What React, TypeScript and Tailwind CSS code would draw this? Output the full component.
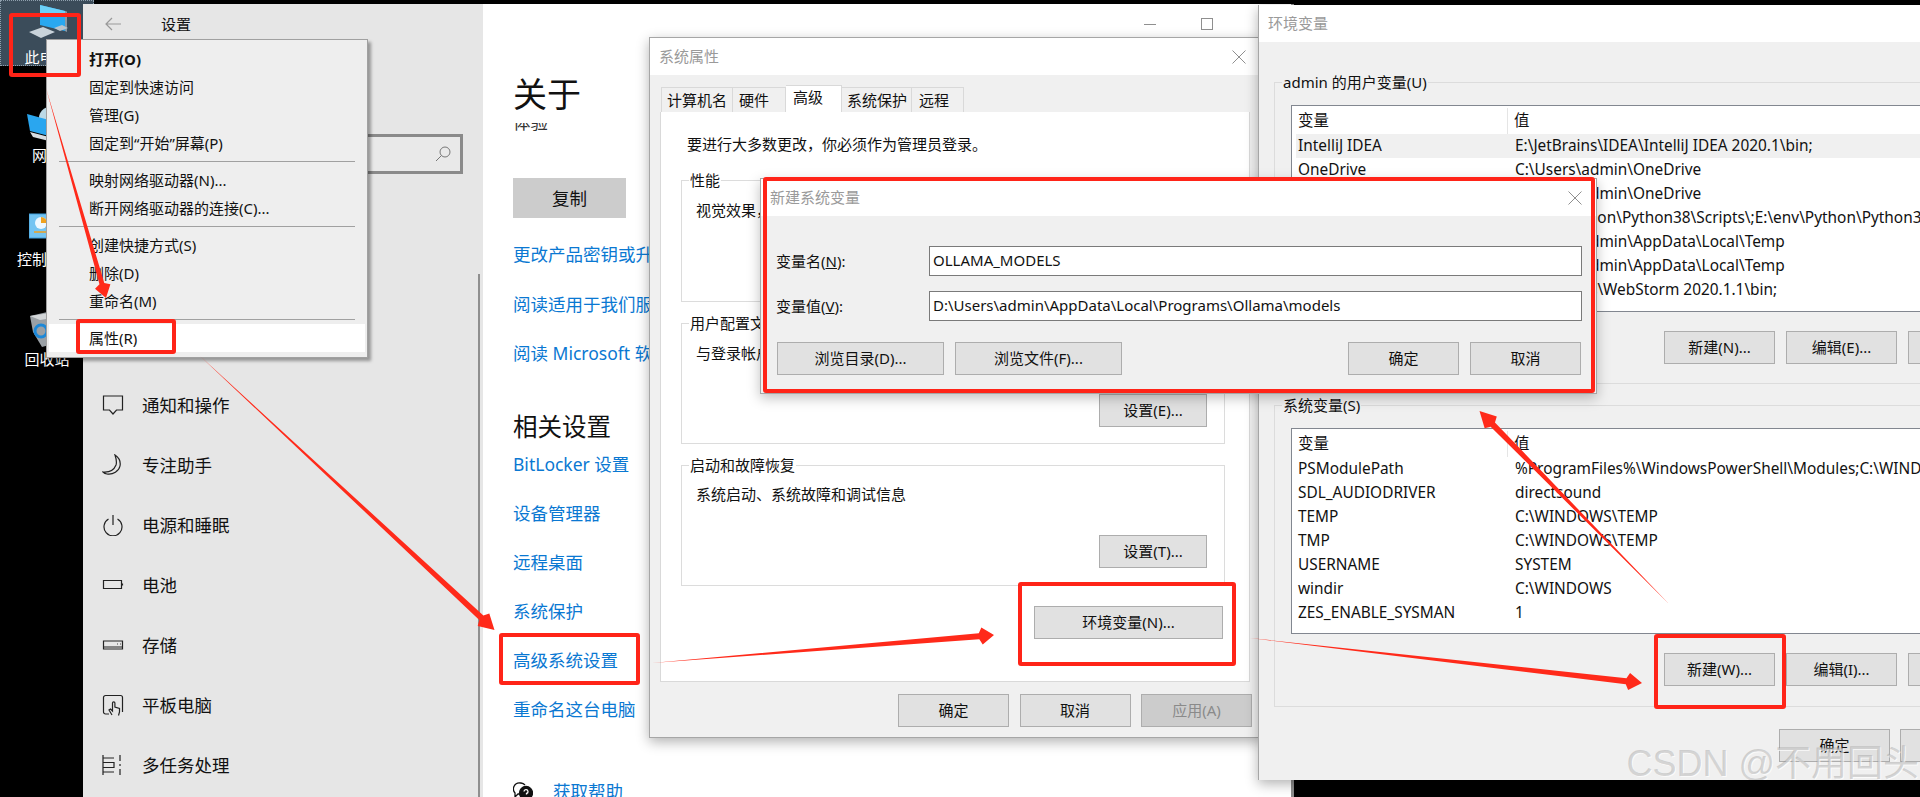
import type { ReactNode } from 'react';

function cnJoin(...parts: (string | undefined | false)[]): string {
  return parts.filter(Boolean).join(' ');
}

function WinButton({ children, className, disabled }: { children: ReactNode; className?: string; disabled?: boolean }) {
  return (
    <div
      className={cnJoin(
        'flex h-[33px] shrink-0 items-center justify-center border border-[#adadad] text-[15px]',
        disabled ? 'bg-[#cccccc] text-[#8a8a8a]' : 'bg-[#e1e1e1] text-[#111111]',
        className
      )}
    >
      {children}
    </div>
  );
}

function CloseX({ className }: { className?: string }) {
  return (
    <svg width="14" height="14" viewBox="0 0 14 14" className={className} fill="none" stroke="#8f8f8f" strokeWidth="1">
      <path d="M0.5 0.500 13.500 13.500M13.500 0.500 0.500 13.500" />
    </svg>
  );
}

function TitleBar({ title, height, close }: { title: string; height: string; close?: string }) {
  return (
    <div className={cnJoin('flex shrink-0 items-center justify-between bg-white pl-[9px] text-[15px] text-[#9a9a9a]', height)}>
      <span>{title}</span>
      {close ? <CloseX className={close} /> : null}
    </div>
  );
}

function Group({ legend, className, children }: { legend: string; className?: string; children: ReactNode }) {
  return (
    <fieldset className={cnJoin('border border-[#dcdcdc]', className)}>
      <legend className="ml-[7px] px-[1px] text-[15px] leading-[20px] text-[#111111]">{legend}</legend>
      {children}
    </fieldset>
  );
}

function NavIcon({ d }: { d: string }) {
  return (
    <svg width="22" height="22" viewBox="0 0 22 22" fill="none" stroke="#222222" strokeWidth="1.200" className="shrink-0">
      <path d={d} />
    </svg>
  );
}

const navItems = [
  { label: '通知和操作', d: 'M1.500 2h19v14h-6l-3.500 4-3.500-4h-6z' },
  { label: '专注助手', d: 'M13 1c3 2 6 6 5 11-1 5-7 9-13 8-2-.3-3-1-4-2 6 .5 11-2 13-7 1-3 0-7-1-10z' },
  { label: '电源和睡眠', d: 'M6.500 5a9 9 0 1 0 9 0M11 1v10' },
  { label: '电池', d: 'M1.500 6.500h18v8h-18zM20.500 9.500v2' },
  { label: '存储', d: 'M1.500 7h19v8h-19zM1.500 13h19M15 10h.8M18 10h.8' },
  { label: '平板电脑', d: 'M7 20H3.500a2 2 0 0 1-2-2V3.500a2 2 0 0 1 2-2h15a2 2 0 0 1 2 2V18M10 21l-3-5 1.500-1 2 2V9a1.200 1.200 0 0 1 2.400 0v4l4.600 1.500V18l-1 3.500' },
  { label: '多任务处理', d: 'M1 1v20M1 4h11M1 18h11M1 8.500h11v5H1M18 1v6M18 15v6M18 10v2' },
];

const userRows = [
  ['IntelliJ IDEA', 'E:\\JetBrains\\IDEA\\IntelliJ IDEA 2020.1\\bin;'],
  ['OneDrive', 'C:\\Users\\admin\\OneDrive'],
  ['OneDriveConsumer', 'C:\\Users\\admin\\OneDrive'],
  ['Path', 'E:\\env\\Python\\Python38\\Scripts\\;E:\\env\\Python\\Python38\\;C:\\Users\\admin'],
  ['TEMP', 'C:\\Users\\admin\\AppData\\Local\\Temp'],
  ['TMP', 'C:\\Users\\admin\\AppData\\Local\\Temp'],
  ['WebStorm', 'E:\\JetBrains\\WebStorm 2020.1.1\\bin;'],
];

const systemRows = [
  ['PSModulePath', '%ProgramFiles%\\WindowsPowerShell\\Modules;C:\\WINDOWS\\system32'],
  ['SDL_AUDIODRIVER', 'directsound'],
  ['TEMP', 'C:\\WINDOWS\\TEMP'],
  ['TMP', 'C:\\WINDOWS\\TEMP'],
  ['USERNAME', 'SYSTEM'],
  ['windir', 'C:\\WINDOWS'],
  ['ZES_ENABLE_SYSMAN', '1'],
];

function VarList({ rows, height, highlightFirst }: { rows: string[][]; height: string; highlightFirst?: boolean }) {
  return (
    <div className={cnJoin('w-[800px] shrink-0 border border-[#828790] bg-white pl-[4px] pt-[2px] text-[15.400px] text-[#111111]', height)}>
      <div className="flex h-[26px] items-center">
        <span className="flex h-full w-[212px] items-center border-r border-[#e5e5e5] pl-[2px]">变量</span>
        <span className="pl-[6px]">值</span>
      </div>
      {rows.map((row, i) => (
        <div key={row[0] + i} className={cnJoin('flex h-[24px] items-center whitespace-nowrap', highlightFirst && i === 0 && 'bg-[#f0f0f0]')}>
          <span className="w-[219px] shrink-0 pl-[2px]">{row[0]}</span>
          <span>{row[1]}</span>
        </div>
      ))}
    </div>
  );
}

function DesktopLabel({ text, className, children }: { text: string; className: string; children: ReactNode }) {
  return (
    <div className={cnJoin('absolute left-0 flex w-[94px] flex-col items-center text-[15px] text-white', className)}>
      {children}
      <span>{text}</span>
    </div>
  );
}

function RedBox({ className }: { className: string }) {
  return <div className={cnJoin('absolute rounded-[3px] border-[4px] border-[#ff2418]', className)} />;
}

function arrowPoints(x1: number, y1: number, x2: number, y2: number, len: number, wing: number, shaft: number): string {
  const d = Math.hypot(x2 - x1, y2 - y1);
  const ux = (x2 - x1) / d;
  const uy = (y2 - y1) / d;
  const bx = x2 - ux * len;
  const by = y2 - uy * len;
  const nx = x2 - ux * (len + 3);
  const ny = y2 - uy * (len + 3);
  const pts = [
    [x1, y1],
    [nx - uy * shaft, ny + ux * shaft],
    [bx - uy * wing, by + ux * wing],
    [x2, y2],
    [bx + uy * wing, by - ux * wing],
    [nx + uy * shaft, ny - ux * shaft],
  ];
  return pts.map((p) => p.join(',')).join(' ');
}

const arrows = [
  arrowPoints(46, 88, 106, 298, 12, 8, 2.500),
  arrowPoints(200, 356, 494.500, 630, 15, 8.500, 3),
  arrowPoints(652, 663, 994, 635, 12, 8.500, 3),
  arrowPoints(1250, 638, 1642, 683, 13, 8.500, 3),
  arrowPoints(1669, 604, 1479.500, 411, 16, 8.500, 3),
];

const linkClass = 'flex h-[28px] shrink-0 items-center whitespace-nowrap text-[17.500px] text-[#0a78d2]';

export default function App() {
  return (
    <div className="relative h-[797px] w-[1920px] overflow-hidden bg-black font-['Noto_Sans','Noto_Sans_CJK_SC',sans-serif]">
      {/* desktop */}
      <div className="absolute left-0 top-0 h-[66px] w-[94px] border border-dotted border-[#8fa0ae] bg-[#3b4c5a]" />
      <DesktopLabel text="此电脑" className="top-[4px]">
        <svg width="42" height="34" viewBox="0 0 42 34" className="mb-[8px] ml-[6px]">
          <path d="M11 1l25 6v20L11 21z" fill="#29a8f0" />
          <path d="M11 1l25 6v5L11 10z" fill="#6cd0f8" />
          <path d="M36 7l2 .5V28l-2-1z" fill="#8a98a4" />
          <path d="M0 28l14-5 12 5-14 6z" fill="#c9d3da" />
          <path d="M25 24l8-3 6 3-8 3z" fill="#b9c4cc" />
        </svg>
      </DesktopLabel>
      <DesktopLabel text="网络" className="top-[106px]">
        <svg width="40" height="38" viewBox="0 0 40 38">
          <circle cx="23" cy="12" r="11" fill="#bcd9e6" />
          <path d="M0 8l22 6v16L3 25z" fill="#2aa6ef" />
          <path d="M3 26l19 5v4L6 31z" fill="#d7dde2" />
        </svg>
      </DesktopLabel>
      <DesktopLabel text="控制面板" className="top-[212px]">
        <svg width="36" height="28" viewBox="0 0 36 28" className="mb-[8px]">
          <rect x="0" y="2" width="36" height="24" fill="#74c4f2" stroke="#3f9fdc" />
          <circle cx="12" cy="11" r="6" fill="#eef8ff" />
          <path d="M12 11V5a6 6 0 0 1 6 6z" fill="#f0a21e" />
          <path d="M5 20h14" stroke="#f0a21e" strokeWidth="1.500" />
        </svg>
      </DesktopLabel>
      <DesktopLabel text="回收站" className="top-[310px]">
        <svg width="36" height="38" viewBox="0 0 36 38">
          <path d="M1 6l26-6 8 6-4 26-18 5L4 22z" fill="#9aa0a5" />
          <path d="M1 6l26-4 8 4-24 4z" fill="#d3d6d8" />
          <circle cx="12" cy="21" r="6" fill="none" stroke="#1c88d8" strokeWidth="3" />
        </svg>
      </DesktopLabel>

      {/* settings window */}
      <div className="absolute left-[83px] top-[4px] flex h-[793px] w-[1211px] overflow-hidden border-r-[3px] border-[#8c8c8c] bg-white">
        <div className="relative w-[400px] shrink-0 bg-[#e6e6e6]">
          <div className="flex h-[40px] items-center pl-[22px] text-[15px] text-[#111111]">
            <svg width="16" height="14" viewBox="0 0 16 14" fill="none" stroke="#999999" strokeWidth="1.200">
              <path d="M16 7H1M7 1 1 7l6 6" />
            </svg>
            <span className="ml-[40px]">设置</span>
          </div>
          <div className="ml-[20px] mt-[90px] flex h-[40px] w-[360px] items-center justify-end border-[3px] border-[#8a8a8a] bg-[#e9e9e9] pr-[9px]">
            <svg width="16" height="16" viewBox="0 0 16 16" fill="none" stroke="#777777" strokeWidth="1">
              <circle cx="10" cy="6" r="5" />
              <path d="M6.500 9.500 1 15" />
            </svg>
          </div>
          <div className="mt-[201px] flex flex-col pl-[19px] text-[17.500px] text-[#111111]">
            {navItems.map((item) => (
              <div key={item.label} className="flex h-[60px] items-center gap-[18px]">
                <NavIcon d={item.d} />
                <span>{item.label}</span>
              </div>
            ))}
          </div>
          <div className="absolute bottom-0 right-[3px] top-[270px] w-[2px] bg-[#8f8f8f]" />
        </div>
        <div className="flex min-w-0 flex-1 flex-col pl-[30px]">
          <div className="flex h-[40px] shrink-0 items-center justify-end gap-[45px] pr-[78px]">
            <div className="h-px w-[12px] bg-[#8f8f8f]" />
            <div className="h-[12px] w-[12px] border border-[#8f8f8f]" />
          </div>
          <div className="mt-[25px] flex h-[50px] shrink-0 items-center text-[34px] text-[#111111]">关于</div>
          <div className="mt-[4px] h-[9px] shrink-0 overflow-hidden text-[17.500px] leading-[24px] text-[#333333]">
            <div className="-mt-[13px]">体验</div>
          </div>
          <div className="mt-[46px] flex h-[40px] w-[113px] shrink-0 items-center justify-center bg-[#cccccc] text-[17.500px] text-[#111111]">复制</div>
          <div className={cnJoin(linkClass, 'mt-[22px]')}>更改产品密钥或升级 Windows</div>
          <div className={cnJoin(linkClass, 'mt-[22px]')}>阅读适用于我们服务的 Microsoft 服务协议</div>
          <div className={cnJoin(linkClass, 'mt-[21px]')}>阅读 Microsoft 软件许可条款</div>
          <div className="mt-[40px] flex h-[40px] shrink-0 items-center text-[24.500px] text-[#111111]">相关设置</div>
          <div className={cnJoin(linkClass, 'mt-[3px]')}>BitLocker 设置</div>
          <div className={cnJoin(linkClass, 'mt-[21px]')}>设备管理器</div>
          <div className={cnJoin(linkClass, 'mt-[21px]')}>远程桌面</div>
          <div className={cnJoin(linkClass, 'mt-[21px]')}>系统保护</div>
          <div className={cnJoin(linkClass, 'mt-[21px]')}>高级系统设置</div>
          <div className={cnJoin(linkClass, 'mt-[21px]')}>重命名这台电脑</div>
          <div className={cnJoin(linkClass, 'mt-[54px] gap-[20px]')}>
            <svg width="20" height="20" viewBox="0 0 20 20" fill="none" stroke="#111111" strokeWidth="1.300">
              <path d="M8 13H5l-3 3v-4a6 6 0 0 1 5-10h1a6 6 0 0 1 4 2" />
              <circle cx="13" cy="12" r="6.500" fill="#111111" />
              <path d="M11 10.500a2 2 0 1 1 2.500 2v1" stroke="#ffffff" />
            </svg>
            <span>获取帮助</span>
          </div>
        </div>
      </div>

      {/* context menu */}
      <div className="absolute left-[46px] top-[39px] flex w-[322px] flex-col border border-[#a0a0a0] bg-[#eeeeee] py-[5px] text-[15px] text-[#111111] shadow-[3px_3px_3px_rgba(0,0,0,0.35)]">
        <div className="flex h-[28px] items-center pl-[42px] font-bold">打开(O)</div>
        <div className="flex h-[28px] items-center pl-[42px]">固定到快速访问</div>
        <div className="flex h-[28px] items-center pl-[42px]">管理(G)</div>
        <div className="flex h-[28px] items-center pl-[42px]">固定到“开始”屏幕(P)</div>
        <div className="mx-[12px] my-[4px] h-px bg-[#a0a0a0]" />
        <div className="flex h-[28px] items-center pl-[42px]">映射网络驱动器(N)...</div>
        <div className="flex h-[28px] items-center pl-[42px]">断开网络驱动器的连接(C)...</div>
        <div className="mx-[12px] my-[4px] h-px bg-[#a0a0a0]" />
        <div className="flex h-[28px] items-center pl-[42px]">创建快捷方式(S)</div>
        <div className="flex h-[28px] items-center pl-[42px]">删除(D)</div>
        <div className="flex h-[28px] items-center pl-[42px]">重命名(M)</div>
        <div className="mx-[12px] my-[4px] h-px bg-[#a0a0a0]" />
        <div className="mx-[2px] flex h-[28px] items-center bg-white pl-[40px]">属性(R)</div>
      </div>

      {/* system properties */}
      <div className="absolute left-[649px] top-[37px] flex h-[701px] w-[614px] flex-col border border-[#a6a6a6] bg-[#f0f0f0] shadow-[0_4px_12px_rgba(0,0,0,0.3)]">
        <TitleBar title="系统属性" height="h-[37px]" close="mr-[16px]" />
        <div className="ml-[11px] mt-[10px] flex h-[27px] items-end text-[15px] text-[#111111]">
          <div className="flex h-[25px] w-[72px] items-center border border-b-0 border-[#d9d9d9] pl-[5px]">计算机名</div>
          <div className="flex h-[25px] w-[53px] items-center border-r border-t border-[#d9d9d9] pl-[6px]">硬件</div>
          <div className="flex h-[27px] w-[56px] items-center border-r border-t border-[#d9d9d9] bg-white pb-[3px] pl-[7px]">高级</div>
          <div className="flex h-[25px] w-[70px] items-center border-r border-t border-[#d9d9d9] pl-[5px]">系统保护</div>
          <div className="flex h-[25px] w-[52px] items-center border-r border-t border-[#d9d9d9] pl-[7px]">远程</div>
        </div>
        <div className="ml-[10px] flex h-[570px] w-[590px] shrink-0 flex-col border border-t-0 border-[#d9d9d9] bg-white pl-[20px] pr-[24px] text-[15px] text-[#111111]">
          <div className="ml-[6px] mt-[22px] flex h-[20px] items-center">要进行大多数更改，你必须作为管理员登录。</div>
          <Group legend="性能" className="mt-[16px] h-[132px]">
            <div className="flex flex-col px-[14px]">
              <div className="mt-[10px] h-[20px] leading-[20px]">视觉效果，处理器计划，内存使用，以及虚拟内存</div>
              <WinButton className="ml-auto mr-[3px] mt-[31px] w-[108px]">设置(S)...</WinButton>
            </div>
          </Group>
          <Group legend="用户配置文件" className="mt-[11px] h-[131px]">
            <div className="flex flex-col px-[14px]">
              <div className="mt-[10px] h-[20px] leading-[20px]">与登录帐户相关的桌面设置</div>
              <WinButton className="ml-auto mr-[3px] mt-[31px] w-[108px]">设置(E)...</WinButton>
            </div>
          </Group>
          <Group legend="启动和故障恢复" className="mt-[11px] h-[131px]">
            <div className="flex flex-col px-[14px]">
              <div className="mt-[9px] h-[20px] leading-[20px]">系统启动、系统故障和调试信息</div>
              <WinButton className="ml-auto mr-[3px] mt-[31px] w-[108px]">设置(T)...</WinButton>
            </div>
          </Group>
          <WinButton className="ml-auto mr-[2px] mt-[20px] w-[189px]">环境变量(N)...</WinButton>
        </div>
        <div className="mr-[10px] mt-[12px] flex justify-end gap-[10.500px]">
          <WinButton className="w-[111px]">确定</WinButton>
          <WinButton className="w-[111px]">取消</WinButton>
          <WinButton className="w-[111px]" disabled>应用(A)</WinButton>
        </div>
      </div>

      {/* environment variables */}
      <div className="absolute left-[1258px] right-0 top-[5px] flex h-[775px] flex-col overflow-hidden border-l border-[#a6a6a6] bg-[#f0f0f0] shadow-[0_4px_12px_rgba(0,0,0,0.3)]">
        <TitleBar title="环境变量" height="h-[37px]" />
        <div className="ml-[15px] mt-[30px] flex w-[900px] flex-col">
          <Group legend="admin 的用户变量(U)" className="h-[312px]">
            <div className="flex flex-col pl-[16px]">
              <div className="mt-[13px]">
                <VarList rows={userRows} height="h-[207px]" highlightFirst />
              </div>
              <div className="ml-[373px] mt-[19px] flex gap-[11px]">
                <WinButton className="w-[111px]">新建(N)...</WinButton>
                <WinButton className="w-[111px]">编辑(E)...</WinButton>
                <WinButton className="w-[111px]">删除(D)</WinButton>
              </div>
            </div>
          </Group>
          <Group legend="系统变量(S)" className="mt-[11px] h-[312px]">
            <div className="flex flex-col pl-[16px]">
              <div className="mt-[13px]">
                <VarList rows={systemRows} height="h-[206px]" />
              </div>
              <div className="ml-[373px] mt-[19px] flex gap-[11px]">
                <WinButton className="w-[111px]">新建(W)...</WinButton>
                <WinButton className="w-[111px]">编辑(I)...</WinButton>
                <WinButton className="w-[111px]">删除(L)</WinButton>
              </div>
            </div>
          </Group>
          <div className="ml-[505px] mt-[22px] flex gap-[10px]">
            <WinButton className="w-[111px]">确定</WinButton>
            <WinButton className="w-[111px]">取消</WinButton>
          </div>
        </div>
        <div className="absolute bottom-[-6px] right-[1px] whitespace-nowrap font-['Liberation_Sans','Noto_Sans_CJK_SC',sans-serif] text-[36px] leading-[44px] text-[#8c8c8c]/35 [text-shadow:1px_1px_0_rgba(255,255,255,0.7)]">
          CSDN @不用回头
        </div>
      </div>

      {/* new system variable */}
      <div className="absolute left-[760px] top-[178px] flex h-[216px] w-[837px] flex-col border border-[#a6a6a6] bg-[#f0f0f0] shadow-[0_4px_12px_rgba(0,0,0,0.25)]">
        <TitleBar title="新建系统变量" height="h-[37px]" close="mr-[14px]" />
        <div className="mt-[30px] flex items-center pl-[15px] text-[15px] text-[#111111]">
          <span className="w-[153px]">变量名(<span className="underline">N</span>):</span>
          <div className="flex h-[30px] w-[653px] items-center border border-[#7a7a7a] bg-white pb-[2px] pl-[3px]">OLLAMA_MODELS</div>
        </div>
        <div className="mt-[15px] flex items-center pl-[15px] text-[15px] text-[#111111]">
          <span className="w-[153px]">变量值(<span className="underline">V</span>):</span>
          <div className="flex h-[30px] w-[653px] items-center border border-[#7a7a7a] bg-white pb-[2px] pl-[3px]">D:\Users\admin\AppData\Local\Programs\Ollama\models</div>
        </div>
        <div className="mt-[21px] flex gap-[11px] pl-[16px] pr-[15px]">
          <WinButton className="w-[167px]">浏览目录(D)...</WinButton>
          <WinButton className="w-[167px]">浏览文件(F)...</WinButton>
          <WinButton className="ml-auto w-[111px]">确定</WinButton>
          <WinButton className="w-[111px]">取消</WinButton>
        </div>
      </div>

      {/* annotations */}
      <RedBox className="left-[9px] top-[13px] h-[64px] w-[72px]" />
      <RedBox className="left-[76px] top-[319px] h-[35px] w-[100px]" />
      <RedBox className="left-[499px] top-[633px] h-[52px] w-[141px]" />
      <RedBox className="left-[1018px] top-[582px] h-[84px] w-[218px]" />
      <RedBox className="left-[763px] top-[177px] h-[216px] w-[832px]" />
      <RedBox className="left-[1654px] top-[634px] h-[75px] w-[132px]" />
      <svg width="1920" height="797" viewBox="0 0 1920 797" className="pointer-events-none absolute left-0 top-0">
        {arrows.map((points) => (
          <polygon key={points} points={points} fill="#ff2a1a" />
        ))}
      </svg>
    </div>
  );
}
